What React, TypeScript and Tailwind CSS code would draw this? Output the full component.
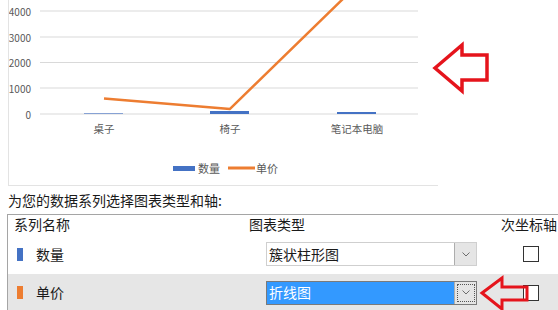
import React from "react";

const FONT = { fontFamily: '"Noto Sans CJK SC", "Microsoft YaHei", sans-serif' };

const GRID = [
  { y: 11, label: "4000" },
  { y: 37, label: "3000" },
  { y: 62.5, label: "2000" },
  { y: 88, label: "1000" },
  { y: 114, label: "0" },
];

const CATEGORIES = [
  { x: 104, name: "桌子", bar: 1 },
  { x: 230, name: "椅子", bar: 3 },
  { x: 357, name: "笔记本电脑", bar: 2 },
];

// 单价: 600, 200, 5000 -> y = 114 - v * 0.02575
const PRICE_LINE = "104,98.5 230,108.9 357,-14.8";

function Chart() {
  return (
    <div className="relative ml-2 h-[186px] w-[430px] overflow-hidden border-b border-l border-[#e3e3e3]">
      <svg width={429} height={185} viewBox="9 0 429 185" className="block">
        {GRID.map((g) => (
          <g key={g.label}>
            <line x1={40} x2={418} y1={g.y} y2={g.y} stroke="#d9d9d9" strokeWidth={1} />
            <text
              x={31}
              y={g.y}
              textAnchor="end"
              dominantBaseline="central"
              fontSize={10}
              fill="#595959"
            >
              {g.label}
            </text>
          </g>
        ))}
        {CATEGORIES.map((c) => (
          <g key={c.name}>
            <rect x={c.x - 20} y={114 - c.bar} width={39} height={c.bar} fill="#4472c4" opacity={c.bar === 1 ? 0.6 : 1} />
            <text x={c.x} y={128} textAnchor="middle" dominantBaseline="central" fontSize={10.5} fill="#595959">
              {c.name}
            </text>
          </g>
        ))}
        <polyline points={PRICE_LINE} fill="none" stroke="#ed7d31" strokeWidth={2.5} strokeLinejoin="round" />
        <rect x={173} y={166} width={22} height={5} fill="#4472c4" />
        <text x={198} y={168} dominantBaseline="central" fontSize={11} fill="#595959">
          数量
        </text>
        <line x1={228} x2={255} y1={168} y2={168} stroke="#ed7d31" strokeWidth={3} />
        <text x={256} y={168} dominantBaseline="central" fontSize={11} fill="#595959">
          单价
        </text>
      </svg>
    </div>
  );
}

// red outline "left" arrows laid over the page, drawn in page coordinates
function Annotations() {
  return (
    <svg width={558} height={310} className="pointer-events-none absolute left-0 top-0">
      <polygon
        points="435,68 462,45 462,55 487,55 487,80 462,80 462,91"
        fill="none"
        stroke="#e5141c"
        strokeWidth={3.5}
      />
      <polygon
        points="482,293 502,278 502,287 527,287 527,300 502,300 502,309"
        fill="none"
        stroke="#e5141c"
        strokeWidth={3}
      />
    </svg>
  );
}

function Chevron() {
  return (
    <svg width={8} height={5} viewBox="0 0 8 5">
      <polyline points="0.5,0.5 4,4 7.5,0.5" fill="none" stroke="#6d6d6d" strokeWidth={1} />
    </svg>
  );
}

function Select({ value, active }: { value: string; active?: boolean }) {
  return (
    <div
      className={
        active
          ? "flex h-[24px] w-[211px] border border-[#7a7a7a]"
          : "flex h-[24px] w-[211px] border border-[#cfcfcf] bg-white"
      }
    >
      <div
        className={
          active
            ? "flex flex-1 items-center bg-[#3399ff] pl-[2px] text-[14px] text-white"
            : "flex flex-1 items-center pl-[2px] text-[14px] text-[#1a1a1a]"
        }
      >
        {value}
      </div>
      <div className="flex w-[22px] items-center justify-center border-l border-[#adadad] bg-[#e5e5e5]">
        {active ? (
          <div className="flex h-[18px] w-[18px] items-center justify-center border border-dotted border-[#555]">
            <Chevron />
          </div>
        ) : (
          <Chevron />
        )}
      </div>
    </div>
  );
}

function Row({
  name,
  color,
  type,
  active,
}: {
  name: string;
  color: string;
  type: string;
  active?: boolean;
}) {
  return (
    <div className={active ? "flex h-[37px] items-center bg-[#e6e6e6]" : "flex h-[40px] items-center"}>
      <div className="flex w-[241px] items-center">
        <div className={`ml-[9px] h-[13px] w-[6px] ${color}`} />
        <span className="ml-[13px] text-[14px] text-[#1a1a1a]">{name}</span>
      </div>
      <div className="w-[252px] pl-[17px]">
        <Select value={type} active={active} />
      </div>
      <div className="flex flex-1 justify-center pl-[2px]">
        <div className="h-[16px] w-[16px] border border-[#333] bg-white" />
      </div>
    </div>
  );
}

export default function App() {
  return (
    <div className="relative h-[310px] w-[558px] overflow-hidden bg-white" style={FONT}>
      <Chart />

      <div className="flex h-[28px] items-center pl-2 text-[14px] text-[#1a1a1a]">
        为您的数据系列选择图表类型和轴:
      </div>

      <div className="ml-[7px] border-l border-t border-[#a5a5a5]">
        <div className="flex h-[19px] items-center text-[14px] text-[#1a1a1a]">
          <div className="w-[241px] pl-[6px]">系列名称</div>
          <div className="w-[252px]">图表类型</div>
          <div className="flex-1">次坐标轴</div>
        </div>
        <Row name="数量" color="bg-[#4472c4]" type="簇状柱形图" />
        <Row name="单价" color="bg-[#ed7d31]" type="折线图" active />
      </div>

      <Annotations />
    </div>
  );
}
